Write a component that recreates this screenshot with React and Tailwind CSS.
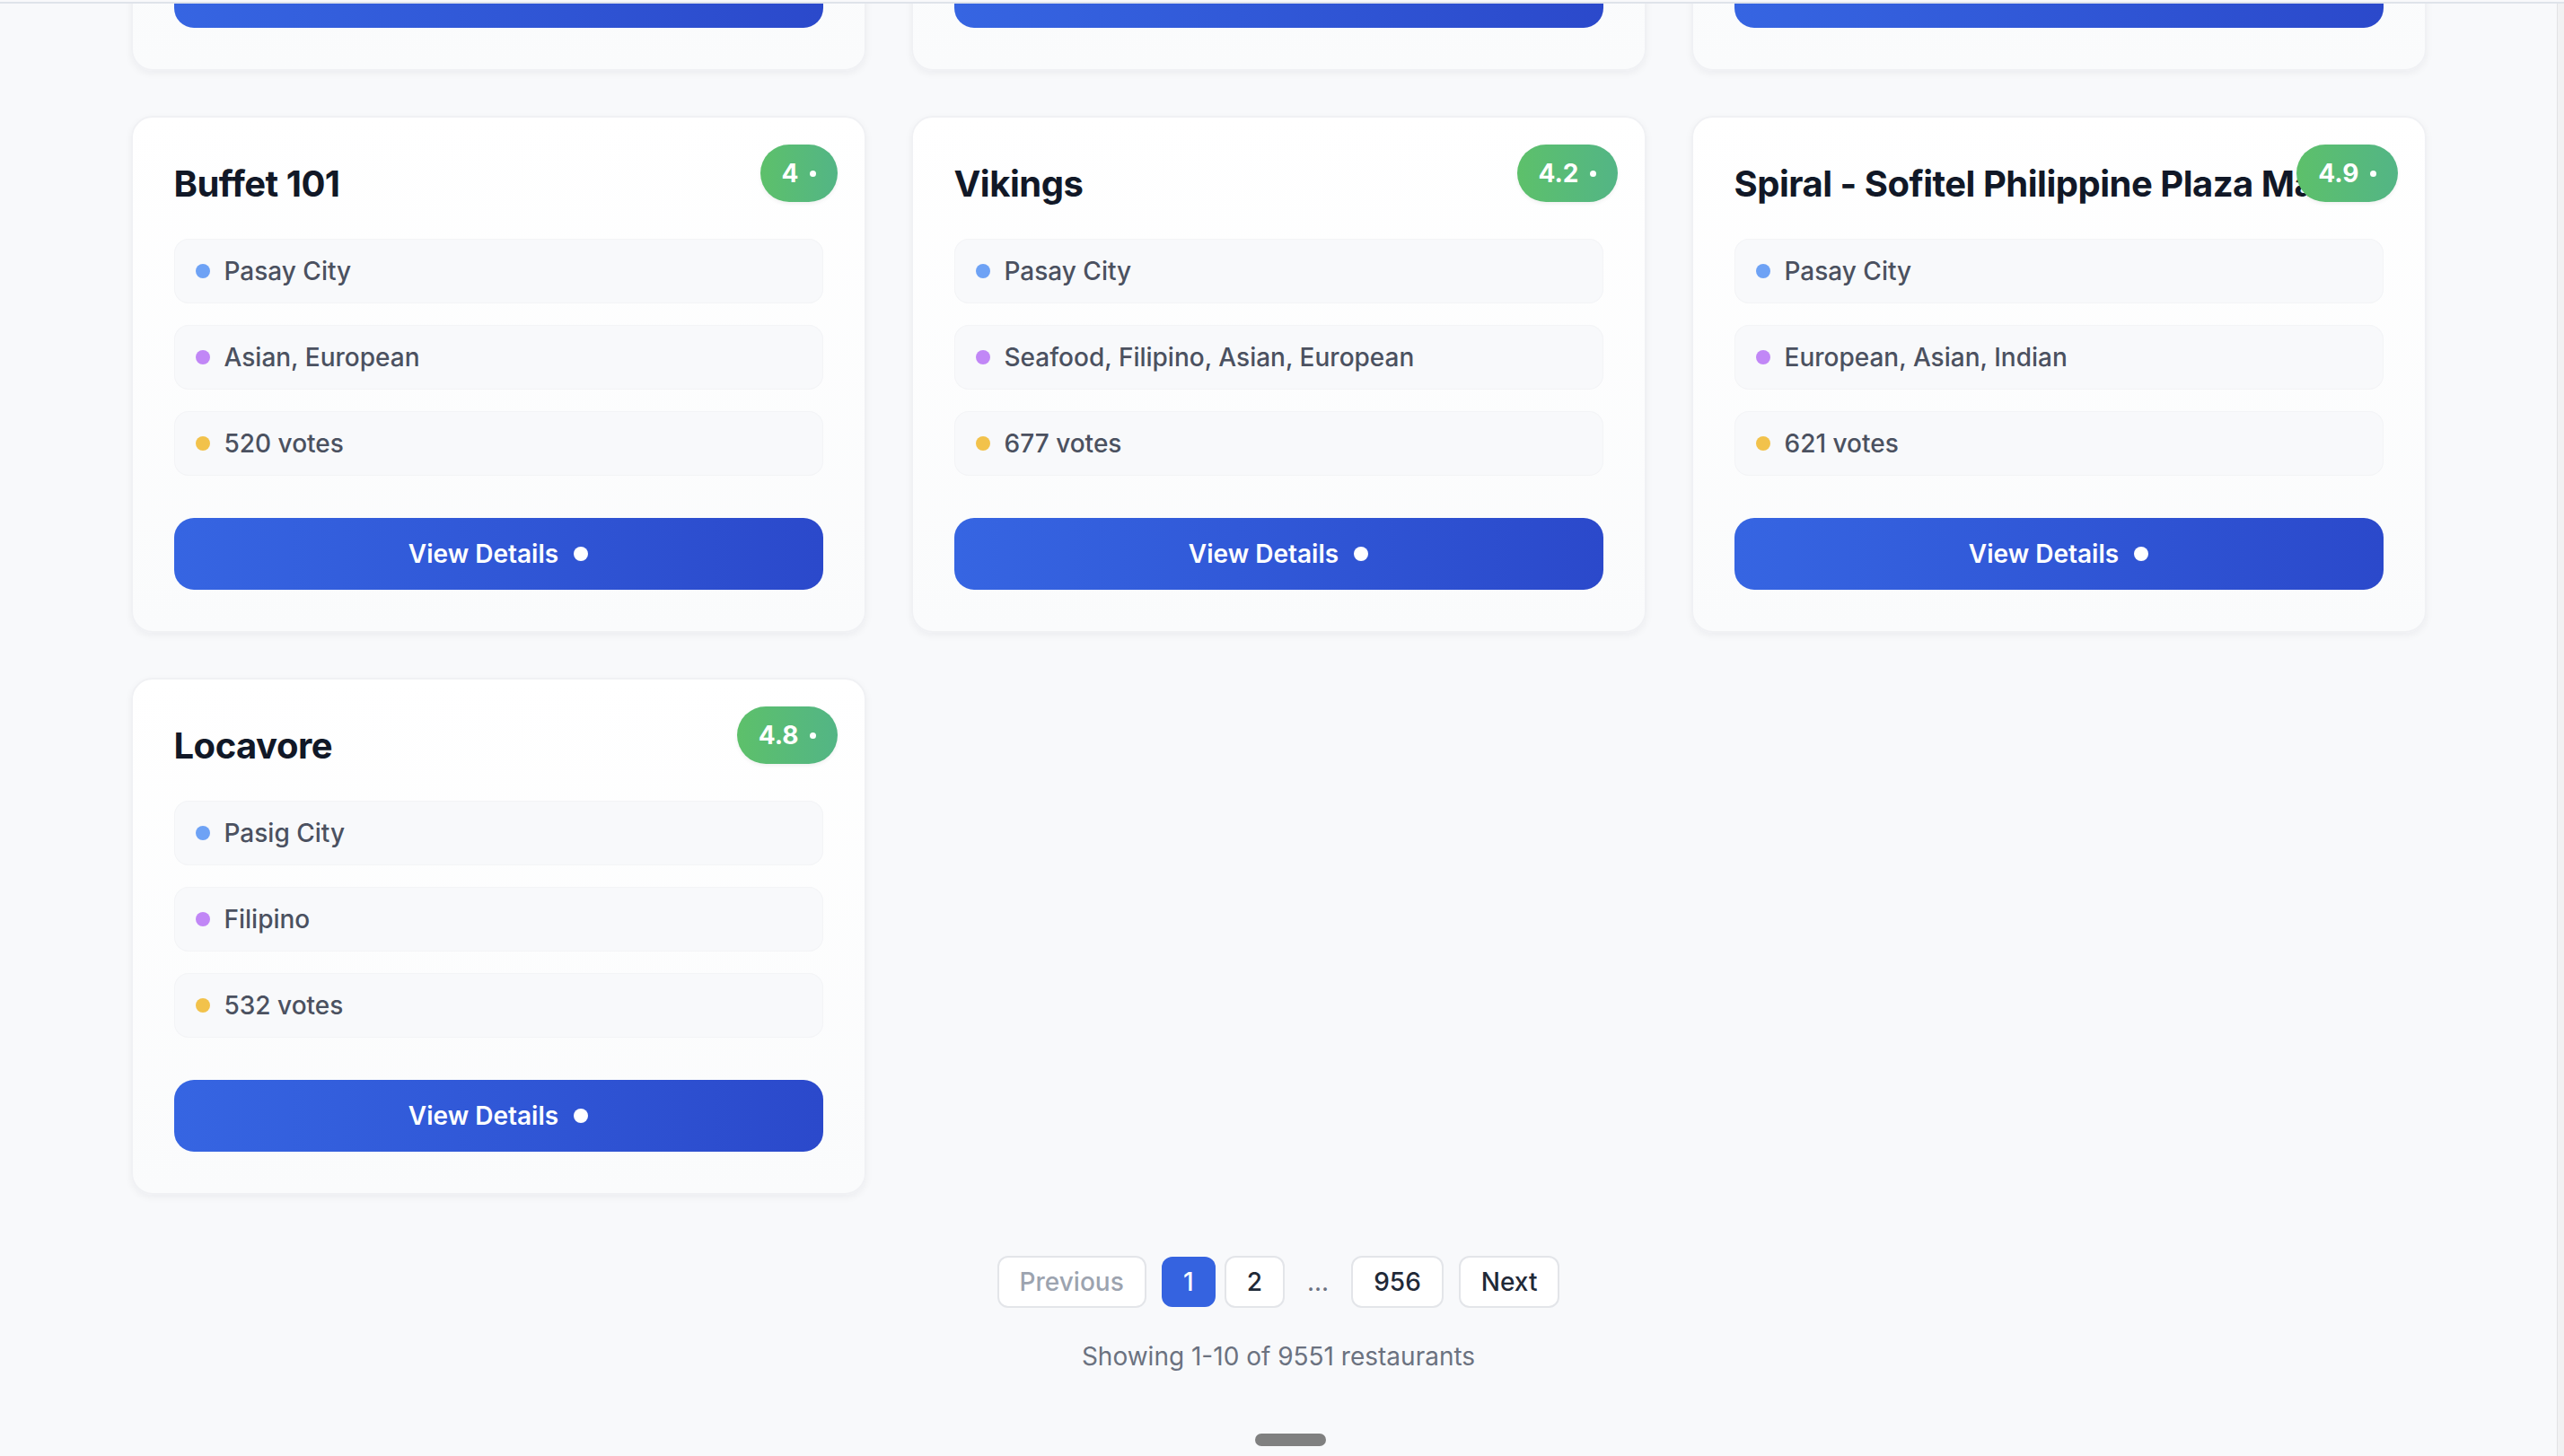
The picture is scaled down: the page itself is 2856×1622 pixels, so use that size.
import React, { useLayoutEffect, useRef } from "react";

const restaurants = [
  { name: "Manila House", city: "Taguig City", cuisine: "Japanese, Filipino", votes: 410, rating: "4.5" },
  { name: "Nobu", city: "Parañaque City", cuisine: "Japanese, Sushi", votes: 702, rating: "4.6" },
  { name: "Sambo Kojin", city: "Pasig City", cuisine: "Korean, Japanese", votes: 488, rating: "4.1" },
  { name: "Buffet 101", city: "Pasay City", cuisine: "Asian, European", votes: 520, rating: "4" },
  { name: "Vikings", city: "Pasay City", cuisine: "Seafood, Filipino, Asian, European", votes: 677, rating: "4.2" },
  { name: "Spiral - Sofitel Philippine Plaza Manila", city: "Pasay City", cuisine: "European, Asian, Indian", votes: 621, rating: "4.9" },
  { name: "Locavore", city: "Pasig City", cuisine: "Filipino", votes: 532, rating: "4.8" },
];

function InfoRow({ dot, children }) {
  return (
    <div className="flex items-center gap-[16px] h-[72px] px-[24px] rounded-[16px] bg-[#f8f9fb] shadow-[inset_0_0_0_1px_#f3f4f6]">
      <span className={`w-[16px] h-[16px] rounded-full shrink-0 ${dot}`}></span>
      <span className="text-[28px] font-medium text-[#4b5160]">{children}</span>
    </div>
  );
}

function RestaurantCard({ item }) {
  return (
    <div className="relative flex flex-col px-[46px] pt-[46px] pb-[46px] rounded-[24px] bg-gradient-to-b from-white to-[#fafbfc] border-2 border-[#f0f1f4] shadow-[0_3px_8px_rgba(15,23,42,0.05)]">
      <div className="absolute top-[30px] right-[30px] flex items-center gap-[12px] h-[64px] px-[24px] rounded-full bg-gradient-to-r from-[#5dc06a] to-[#53b585] text-white text-[28px] font-bold shadow-[0_2px_4px_rgba(0,0,0,0.06)]">
        <span>{item.rating}</span>
        <span className="w-[7px] h-[7px] rounded-full bg-white"></span>
      </div>
      <h3 className="h-[56px] leading-[56px] text-[40px] font-bold text-[#111827] whitespace-nowrap overflow-hidden tracking-[-0.5px]">
        {item.name}
      </h3>
      <div className="mt-[33px] flex flex-col gap-[24px]">
        <InfoRow dot="bg-[#6ea2f5]">{item.city}</InfoRow>
        <InfoRow dot="bg-[#c187f6]">{item.cuisine}</InfoRow>
        <InfoRow dot="bg-[#f2c24b]">{item.votes} votes</InfoRow>
      </div>
      <button className="mt-[47px] h-[80px] w-full flex items-center justify-center gap-[17px] rounded-[22px] bg-gradient-to-r from-[#3665e2] to-[#2b49cb] text-white text-[28px] font-semibold">
        <span>View Details</span>
        <span className="w-[16px] h-[16px] rounded-full bg-white"></span>
      </button>
    </div>
  );
}

function PageButton({ children, active, disabled }) {
  if (active) {
    return (
      <button className="h-[56px] w-[60px] rounded-[12px] bg-[#3563e0] text-white text-[28px] font-medium">
        {children}
      </button>
    );
  }
  return (
    <button
      className={`h-[58px] px-[23px] rounded-[12px] bg-white border-2 border-[#e3e5e9] text-[28px] font-medium ${
        disabled ? "text-[#9ca3af]" : "text-[#1f2937]"
      }`}
    >
      {children}
    </button>
  );
}

export default function App() {
  const scroller = useRef(null);

  useLayoutEffect(() => {
    if (scroller.current) scroller.current.scrollTop = 497;
  }, []);

  return (
    <div className="relative h-screen w-full flex bg-[#f8f9fb] font-['Inter','Liberation_Sans',sans-serif]">
      <div ref={scroller} className="flex-1 h-full overflow-hidden">
        <div className="w-[2557px] mx-auto pb-[200px]">
          <div className="grid grid-cols-3 gap-[50px]">
            {restaurants.map((r) => (
              <RestaurantCard key={r.name} item={r} />
            ))}
          </div>

          <div className="mt-[68px] flex items-center justify-center gap-[17px]">
            <PageButton disabled>Previous</PageButton>
            <div className="flex items-center gap-[10px]">
              <PageButton active>1</PageButton>
              <PageButton>2</PageButton>
              <span className="px-[15px] text-[28px] text-[#6b7280]">...</span>
              <PageButton>956</PageButton>
            </div>
            <PageButton>Next</PageButton>
          </div>

          <p className="mt-[34px] text-center text-[28px] leading-[40px] text-[#6b7280]">
            Showing 1-10 of 9551 restaurants
          </p>
        </div>
      </div>

      <div className="w-[8px] h-full bg-[#f1f1f2] border-l border-[#e2e2e4]"></div>

      <div className="absolute top-0 left-0 right-0 h-[4px] bg-[#f8f9fb] border-b-2 border-[#dfe3ea]"></div>
      <div className="absolute bottom-[11px] left-[1398px] w-[79px] h-[14px] rounded-full bg-[#808080]"></div>
    </div>
  );
}
